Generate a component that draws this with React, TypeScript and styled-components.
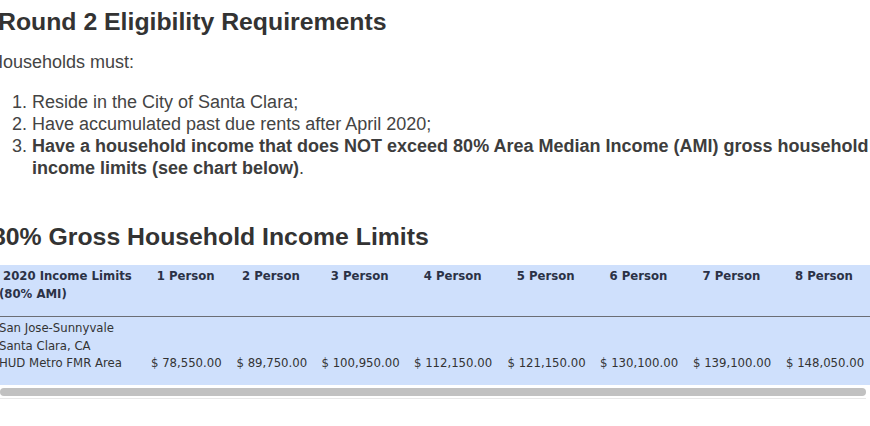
import styled, { createGlobalStyle } from "styled-components";

interface IncomeRow {
  area: string[];
  limits: number[];
}

const persons = [1, 2, 3, 4, 5, 6, 7, 8];

// cell widths measured off the page, first one is the area column
const colWidths = [152, 85.5, 85, 92.5, 93.5, 92.5, 93, 93, 92];

const rows: IncomeRow[] = [
  {
    area: ["San Jose-Sunnyvale", "Santa Clara, CA", "HUD Metro FMR Area"],
    limits: [78550, 89750, 100950, 112150, 121150, 130100, 139100, 148050],
  },
];

const money = (n: number) =>
  "$ " +
  n.toLocaleString("en-US", {
    minimumFractionDigits: 2,
    maximumFractionDigits: 2,
  });

const App = () => {
  return (
    <Page>
      <GlobalStyle />
      <Title offset={-2}>Round 2 Eligibility Requirements</Title>
      <Lead>Households must:</Lead>
      <Steps>
        <li>Reside in the City of Santa Clara;</li>
        <li>Have accumulated past due rents after April 2020;</li>
        <li>
          <strong>
            Have a household income that does NOT exceed 80% Area Median
            Income (AMI) gross household income limits (see chart below)
          </strong>
          .
        </li>
      </Steps>

      <Title offset={-8} spaced>
        80% Gross Household Income Limits
      </Title>

      <TableScroll>
        <LimitsTable>
          <colgroup>
            {colWidths.map((w, i) => (
              <col key={i} style={{ width: w }} />
            ))}
          </colgroup>
          <thead>
            <tr>
              <HeadCell first>
                &nbsp;2020 Income Limits
                <br />
                (80% AMI)
              </HeadCell>
              {persons.map((p) => (
                <HeadCell key={p}>{p} Person</HeadCell>
              ))}
            </tr>
          </thead>
          <tbody>
            {rows.map((row) => (
              <tr key={row.area[0]}>
                <BodyCell first>
                  {row.area.map((line, i) => (
                    <span key={line}>
                      {i > 0 && <br />}
                      {line}
                    </span>
                  ))}
                </BodyCell>
                {row.limits.map((v) => (
                  <BodyCell key={v}>{money(v)}</BodyCell>
                ))}
              </tr>
            ))}
          </tbody>
        </LimitsTable>
      </TableScroll>
      <ScrollTrack>
        <Thumb />
      </ScrollTrack>
    </Page>
  );
};

const GlobalStyle = createGlobalStyle`
  html, body {
    margin: 0;
    padding: 0;
    background: #fff;
    overflow: hidden;
  }
  body {
    font-family: "Liberation Sans", Arial, sans-serif;
    color: #444;
  }
`;

const Page = styled.div`
  width: 880px;
  margin-left: -10px;
  padding-top: 8px;
`;

const Title = styled.h2<{ offset: number; spaced?: boolean }>`
  margin: ${(props) => (props.spaced ? "44px" : "0")} 0 0
    ${(props) => props.offset + 10}px;
  font-size: 24.8px;
  line-height: 28px;
  font-weight: bold;
  color: #333;
`;

const Lead = styled.p`
  margin: 15px 0 0 0;
  font-size: 18px;
  line-height: 22px;
`;

const Steps = styled.ol`
  margin: 18px 0 0 0;
  padding-left: 42px;
  width: 838px;
  font-size: 18px;
  line-height: 22px;

  strong {
    color: #3d3d3d;
  }
`;

const TableScroll = styled.div`
  margin-top: 14px;
  margin-left: 1px;
  width: 879px;
  overflow: hidden;
`;

const LimitsTable = styled.table`
  border-collapse: collapse;
  table-layout: fixed;
  width: 879px;
  background: #cfe0fc;
  font-family: Tahoma, "DejaVu Sans Condensed", "DejaVu Sans", sans-serif;
  font-size: 13px;
  line-height: 17.5px;
  color: #333;
`;

const HeadCell = styled.th<{ first?: boolean }>`
  padding: 2px 8px 14px;
  text-align: ${(props) => (props.first ? "left" : "center")};
  vertical-align: top;
  font-weight: bold;
  color: #2b3246;
  white-space: nowrap;
  border-bottom: 1px solid #6b6e75;
`;

const BodyCell = styled.td<{ first?: boolean }>`
  padding: 2px 8px 13px;
  text-align: ${(props) => (props.first ? "left" : "center")};
  vertical-align: bottom;
  white-space: nowrap;
`;

const ScrollTrack = styled.div`
  margin-left: 10px;
  width: 866px;
  padding: 3px 0 2px;
  border-bottom: 1px solid #e8e8e8;
`;

const Thumb = styled.div`
  height: 8px;
  border-radius: 4px;
  background: #c1c1c1;
`;

export default App;
